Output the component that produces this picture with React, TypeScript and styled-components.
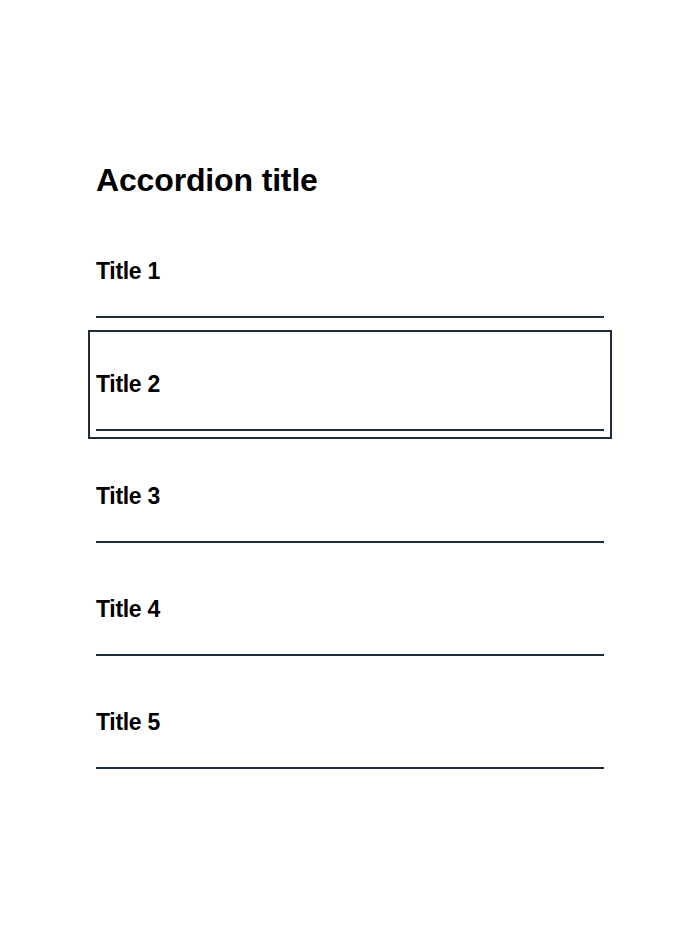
import React from "react";
import styled, { createGlobalStyle } from "styled-components";

const Global = createGlobalStyle`
  html, body { margin: 0; padding: 0; background: #ffffff; }
  body { font-family: "Liberation Sans", Arial, Helvetica, sans-serif; color: #000; }
`;

const Page = styled.main`
  padding: 160px 96px 0 96px;
  width: 508px;
`;

const Heading = styled.h2`
  margin: 0 0 5px 0;
  font-size: 32px;
  line-height: 40px;
  font-weight: 700;
  letter-spacing: -0.15px;
  color: #000;
`;

const List = styled.div`
  display: flex;
  flex-direction: column;
`;

const Item = styled.div`
  padding-top: 19.75px;
`;

const Header = styled.button<{ $focused?: boolean }>`
  display: block;
  width: 100%;
  margin: 0;
  padding: 32px 0 31px 0;
  background: none;
  border: none;
  border-bottom: 2px solid #1f2d3b;
  text-align: left;
  font-family: "Liberation Sans", Arial, Helvetica, sans-serif;
  font-size: 23px;
  line-height: 28px;
  font-weight: 700;
  letter-spacing: -0.3px;
  color: #000;
  cursor: pointer;
  outline: ${(p) => (p.$focused ? "2px solid #1f2d3b" : "none")};
  outline-offset: 6px;
`;

const titles = ["Title 1", "Title 2", "Title 3", "Title 4", "Title 5"];

export default function App() {
  return (
    <>
      <Global />
      <Page>
        <Heading>Accordion title</Heading>
        <List>
          {titles.map((t, i) => (
            <Item key={t}>
              <Header $focused={i === 1} aria-expanded={false}>
                {t}
              </Header>
            </Item>
          ))}
        </List>
      </Page>
    </>
  );
}
